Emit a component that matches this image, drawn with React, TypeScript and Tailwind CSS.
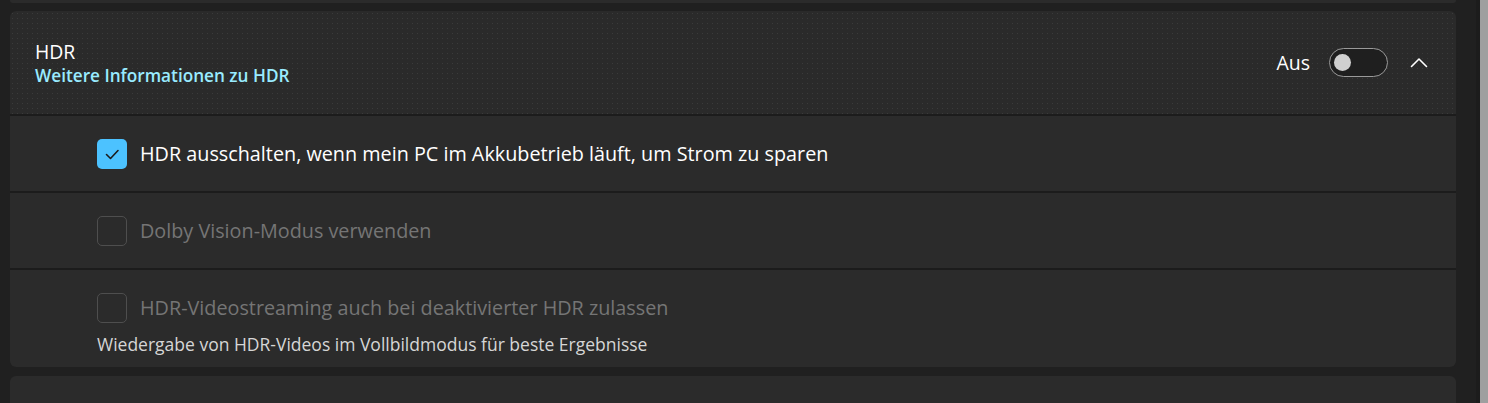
const font = { fontFamily: "'Open Sans', 'Noto Sans', sans-serif" };

function CheckBox({ checked, disabled }: { checked?: boolean; disabled?: boolean }) {
  if (checked) {
    return (
      <div className="flex h-[30px] w-[30px] shrink-0 items-center justify-center rounded-[5px] bg-[#4cc2ff]">
        <svg width="18" height="18" viewBox="0 0 18 18" fill="none">
          <path d="M3.5 9.5 L7.5 13.5 L15 5.5" stroke="#1b1b1b" strokeWidth="1.6" strokeLinecap="round" strokeLinejoin="round" />
        </svg>
      </div>
    );
  }
  return (
    <div
      className={`h-[30px] w-[30px] shrink-0 rounded-[5px] border-[1.5px] ${
        disabled ? 'border-[#4e4e4e]' : 'border-[#9a9a9a]'
      }`}
    />
  );
}

function OptionRow({
  label,
  checked,
  disabled,
  description,
}: {
  label: string;
  checked?: boolean;
  disabled?: boolean;
  description?: string;
}) {
  return (
    <div className={`flex flex-col bg-[#2b2b2b] pl-[87px] ${description ? 'pt-[23px] pb-[12px]' : 'h-[75px] justify-center'}`}>
      <div className="flex items-center gap-[13px]">
        <CheckBox checked={checked} disabled={disabled} />
        <span className={`text-[19.8px] leading-[26px] ${disabled ? 'text-[#757575]' : 'text-white'}`}>{label}</span>
      </div>
      {description && (
        <p className="mt-[10px] text-[17.5px] leading-[22px] text-[#d6d6d6]">{description}</p>
      )}
    </div>
  );
}

export default function App() {
  return (
    <div className="flex h-[403px] w-full overflow-hidden bg-[#202020]" style={font}>
      <div className="flex flex-1 flex-col pl-[10px] pr-[20px]">
        {/* previous card, only its bottom edge shows */}
        <div className="h-[3px] shrink-0 rounded-b-[6px] bg-[#2b2b2b]" />

        <div className="mt-[8px] flex shrink-0 flex-col gap-[2px] overflow-hidden rounded-[6px] bg-[#1c1c1c]">
          {/* Header */}
          <div className="flex h-[103px] items-center justify-between bg-[#2a2a2a] bg-[radial-gradient(circle,#3b3b3b_0.7px,transparent_0.9px)] bg-[length:5px_5px] pl-[25px] pr-[28px]">
            <div className="flex flex-col">
              <span className="text-[19.4px] leading-[26px] text-white">HDR</span>
              <span className="text-[17.2px] font-semibold leading-[22px] text-[#99ebff]">
                Weitere Informationen zu HDR
              </span>
            </div>
            <div className="flex items-center">
              <span className="text-[19.5px] leading-[26px] text-white">Aus</span>
              <div className="ml-[19px] flex h-[29px] w-[59px] items-center rounded-full border-[1.5px] border-[#9a9a9a] bg-[#1f1f1f] pl-[4px]">
                <div className="h-[17px] w-[17px] rounded-full bg-[#d0d0d0]" />
              </div>
              <svg className="ml-[22px]" width="18" height="11" viewBox="0 0 18 11" fill="none">
                <path d="M1.5 9.5 L9 2 L16.5 9.5" stroke="white" strokeWidth="1.6" strokeLinecap="round" strokeLinejoin="round" />
              </svg>
            </div>
          </div>

          <OptionRow label="HDR ausschalten, wenn mein PC im Akkubetrieb läuft, um Strom zu sparen" checked />
          <OptionRow label="Dolby Vision-Modus verwenden" disabled />
          <OptionRow
            label="HDR-Videostreaming auch bei deaktivierter HDR zulassen"
            disabled
            description="Wiedergabe von HDR-Videos im Vollbildmodus für beste Ergebnisse"
          />
        </div>

        {/* next card */}
        <div className="mt-[9px] flex-1 rounded-t-[6px] bg-[#2b2b2b]" />
      </div>

      {/* scrollbar */}
      <div className="w-[4px] shrink-0 bg-[#1c1c1c]" />
      <div className="w-[8px] shrink-0 bg-[#9f9f9f]" />
    </div>
  );
}
